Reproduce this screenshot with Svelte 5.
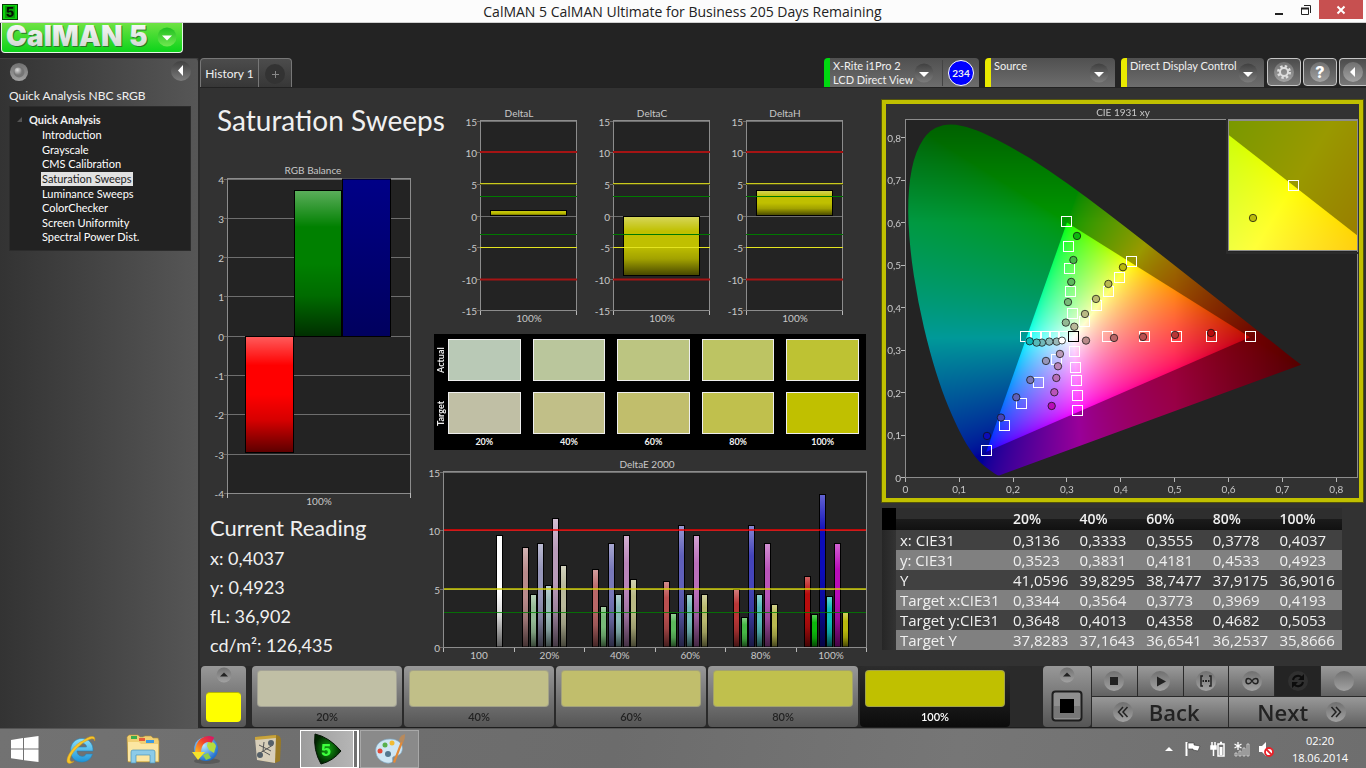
<script>
  import { onMount } from 'svelte';

  const pages = ['Introduction', 'Grayscale', 'CMS Calibration', 'Saturation Sweeps', 'Luminance Sweeps', 'ColorChecker', 'Screen Uniformity', 'Spectral Power Dist.'];
  const selected = 'Saturation Sweeps';
  const levels = ['20%', '40%', '60%', '80%', '100%'];
  const actual = ['#b9c9b6', '#bac69c', '#bcc581', '#bdc463', '#bec233'];
  const target = ['#c0bfa5', '#c1bf88', '#c1be6c', '#c0c04d', '#c0c000'];

  const deltas = [
    { name: 'DeltaL', value: 0.8 },
    { name: 'DeltaC', value: -9.3 },
    { name: 'DeltaH', value: 4 }
  ];
  const dy = (v) => 112 - v * 6.33;
  const row = (n) => Math.floor(n) + 0.5;

  const hues = {
    red: ['#b98a8a', '#b96767', '#b94f4f', '#b83636', '#b80c0c'],
    green: ['#93b993', '#78b978', '#5cb85c', '#45b845', '#0db80d'],
    blue: ['#9696b9', '#7878b9', '#6060b9', '#4444b9', '#0c0cb9'],
    cyan: ['#9ab9b9', '#8ab9b9', '#72b9b9', '#54b9b9', '#0cb9b9'],
    magenta: ['#b99ab9', '#b984b9', '#b96eb9', '#b954b9', '#b90cb9'],
    yellow: ['#b9b99a', '#b9b984', '#b9b96e', '#b9b950', '#b9b90c']
  };
  const hueNames = Object.keys(hues);
  const deltaE = [
    [8.55, 4.56, 8.9, 5.3, 11, 7],
    [6.7, 3.5, 8.85, 4.5, 9.6, 5.85],
    [5.6, 2.9, 10.4, 4.5, 9.6, 4.5],
    [5, 2.6, 10.45, 4.55, 8.9, 3.65],
    [6.1, 2.85, 13.1, 4.4, 8.9, 2.95]
  ];
  const ey = (v) => 191.5 - v * 11.7;
  const eBars = [{ x: 69, v: 9.6, c: '#ffffff' }];
  deltaE.forEach((group, g) => group.forEach((v, k) => {
    eBars.push({ x: Math.round(95 + g * 70.4 + k * 7.6), v, c: hues[hueNames[k]][g] });
  }));

  const targets = [
    [0.299, 0.603], [0.3026, 0.544], [0.3045, 0.4925], [0.3063, 0.438], [0.31, 0.386],
    [0.4193, 0.5075], [0.3967, 0.4698], [0.3769, 0.438], [0.3558, 0.404], [0.3335, 0.368],
    [0.375, 0.3318], [0.4437, 0.3318], [0.5025, 0.3318], [0.568, 0.3318], [0.64, 0.3318],
    [0.224, 0.3318], [0.2426, 0.3318], [0.2605, 0.3318], [0.2766, 0.3318], [0.294, 0.3318],
    [0.3137, 0.2957], [0.3156, 0.2596], [0.3175, 0.2275], [0.3193, 0.193], [0.3205, 0.157],
    [0.2803, 0.277], [0.2469, 0.2227], [0.216, 0.1733], [0.185, 0.1216], [0.1498, 0.0627]
  ];
  const measured = {
    green: [[0.298, 0.3647], [0.302, 0.413], [0.308, 0.4604], [0.312, 0.512], [0.3187, 0.5686]],
    yellow: [[0.3137, 0.355], [0.3335, 0.385], [0.354, 0.4204], [0.3769, 0.4557], [0.404, 0.495]],
    red: [[0.3354, 0.3224], [0.3874, 0.3286], [0.4412, 0.331], [0.5006, 0.3357], [0.5674, 0.3404]],
    cyan: [[0.281, 0.32], [0.2673, 0.32], [0.2537, 0.3176], [0.2438, 0.3176], [0.2308, 0.3208]],
    magenta: [[0.287, 0.291], [0.2834, 0.262], [0.2803, 0.2345], [0.2766, 0.2008], [0.2717, 0.1686]],
    blue: [[0.2611, 0.2745], [0.232, 0.2298], [0.206, 0.189], [0.1776, 0.1412], [0.1516, 0.098]]
  };
  const cx = (x) => 19.3 + x * 538.75;
  const cy = (y) => 373.6 - y * 425;

  const locus = [
    [0.1741, 0.005], [0.1714, 0.0051], [0.1644, 0.0109], [0.1566, 0.0177], [0.144, 0.0297], [0.1355, 0.0399],
    [0.1241, 0.0578], [0.1096, 0.0868], [0.0913, 0.1327], [0.0687, 0.2007], [0.0454, 0.295], [0.0235, 0.4127],
    [0.0082, 0.5384], [0.0039, 0.6548], [0.0139, 0.7502], [0.0389, 0.812], [0.0743, 0.8338], [0.1142, 0.8262],
    [0.1547, 0.8059], [0.2296, 0.7543], [0.3016, 0.6923], [0.3731, 0.6245], [0.4441, 0.5547], [0.5125, 0.4866],
    [0.5752, 0.4242], [0.627, 0.3725], [0.6658, 0.334], [0.6915, 0.3083], [0.719, 0.2809], [0.7347, 0.2653]
  ];
  const gamut = [[0.64, 0.33], [0.3, 0.6], [0.15, 0.06]];

  function chroma(x, y, scale) {
    const yy = Math.max(y, 0.002);
    const X = x / yy, Z = (1 - x - yy) / yy;
    const rgb = [
      3.2406 * X - 1.5372 - 0.4986 * Z,
      -0.9689 * X + 1.8758 + 0.0415 * Z,
      0.0557 * X - 0.204 + 1.057 * Z
    ].map((v) => Math.max(v, 0));
    const top = Math.max(...rgb, 0.0001);
    let fade = 1;
    if (x > 0.5) fade -= (x - 0.5) * 1.9;
    if (y > 0.6) fade -= (y - 0.6) * 1.6;
    return rgb.map((v) => 255 * scale * fade * Math.pow(v / top, 0.62));
  }

  function layer(w, h, ux, uy, scale) {
    const c = document.createElement('canvas');
    c.width = w;
    c.height = h;
    const g = c.getContext('2d');
    const img = g.createImageData(w, h);
    for (let j = 0; j < h; j++) {
      for (let i = 0; i < w; i++) {
        const [r, gg, b] = chroma(ux(i), uy(j), scale);
        img.data.set([r, gg, b, 255], (j * w + i) * 4);
      }
    }
    g.putImageData(img, 0, 0);
    return c;
  }

  let diagram;
  onMount(() => {
    const g = diagram.getContext('2d');
    const w = diagram.width, h = diagram.height;
    const ux = (i) => (i + 0.5 - 19.3) / 538.75;
    const uy = (j) => (373.6 - j - 0.5) / 425;
    g.fillStyle = '#232323';
    g.fillRect(19, 15, 453, 359);
    g.save();
    g.beginPath();
    g.moveTo(cx(locus[0][0]), cy(locus[0][1]));
    for (let i = 1; i < locus.length - 1; i++) {
      const [a, b] = locus[i], [c, d] = locus[i + 1];
      g.quadraticCurveTo(cx(a), cy(b), cx((a + c) / 2), cy((b + d) / 2));
    }
    g.lineTo(cx(0.7347), cy(0.2653));
    g.closePath();
    g.clip();
    g.drawImage(layer(w, h, ux, uy, 0.6), 0, 0);
    g.beginPath();
    gamut.forEach(([x, y], i) => (i ? g.lineTo(cx(x), cy(y)) : g.moveTo(cx(x), cy(y))));
    g.closePath();
    g.clip();
    g.drawImage(layer(w, h, ux, uy, 1), 0, 0);
    g.restore();

    const zx = (x) => 64.5 + (x - 0.4193) * 2583;
    const zy = (y) => 64.5 - (y - 0.5053) * 2538;
    const vx = (i) => 0.4193 + (i - 64) / 2583;
    const vy = (j) => 0.5053 - (j - 64) / 2538;
    g.translate(343, 17);
    g.drawImage(layer(129, 130, vx, vy, 0.6), 0, 0);
    g.beginPath();
    g.rect(0, 0, 129, 130);
    g.clip();
    g.beginPath();
    gamut.forEach(([x, y], i) => (i ? g.lineTo(zx(x), zy(y)) : g.moveTo(zx(x), zy(y))));
    g.closePath();
    g.clip();
    g.drawImage(layer(129, 130, vx, vy, 1), 0, 0);
  });

  const table = [
    ['x: CIE31', '0,3136', '0,3333', '0,3555', '0,3778', '0,4037'],
    ['y: CIE31', '0,3523', '0,3831', '0,4181', '0,4533', '0,4923'],
    ['Y', '41,0596', '39,8295', '38,7477', '37,9175', '36,9016'],
    ['Target x:CIE31', '0,3344', '0,3564', '0,3773', '0,3969', '0,4193'],
    ['Target y:CIE31', '0,3648', '0,4013', '0,4358', '0,4682', '0,5053'],
    ['Target Y', '37,8283', '37,1643', '36,6541', '36,2537', '35,8666']
  ];
</script>

{#snippet chevron()}
  <svg class="knob" width="20" height="20" viewBox="0 0 20 20" aria-hidden="true">
    <circle cx="10" cy="10" r="9.5" fill="url(#knobFill)" />
    <path d="M5 9h10l-5 5z" fill="#fff" />
  </svg>
{/snippet}

<div class="window">
  <svg class="defs" width="0" height="0" aria-hidden="true">
    <defs>
      <linearGradient id="knobFill" x1="0" y1="0" x2="0" y2="1"><stop offset="0" stop-color="#404040" /><stop offset="1" stop-color="#7c7c7c" /></linearGradient>
      <linearGradient id="padFill" x1="0" y1="0" x2="0" y2="1"><stop offset="0" stop-color="#707070" /><stop offset="1" stop-color="#a2a2a2" /></linearGradient>
      <linearGradient id="gloss" x1="0" y1="0" x2="0" y2="1">
        <stop offset="0" stop-color="#fff" stop-opacity=".36" /><stop offset=".25" stop-color="#fff" stop-opacity="0" />
        <stop offset=".5" stop-color="#000" stop-opacity="0" /><stop offset=".72" stop-color="#000" stop-opacity=".16" /><stop offset="1" stop-color="#000" stop-opacity=".64" />
      </linearGradient>
      <linearGradient id="navy" x1="0" y1="0" x2="0" y2="1"><stop offset="0" stop-color="#000087" /><stop offset="1" stop-color="#00005e" /></linearGradient>
      <linearGradient id="silver" x1="0" y1="0" x2="0" y2="1"><stop offset="0" stop-color="#fff" /><stop offset="1" stop-color="#c9d0c9" /></linearGradient>
      <linearGradient id="leaf" x1="0" y1="0" x2="0" y2="1"><stop offset="0" stop-color="#20c020" /><stop offset="1" stop-color="#70e850" /></linearGradient>
      <linearGradient id="ieBlue" x1="0" y1="0" x2="0" y2="1"><stop offset="0" stop-color="#8be0fb" /><stop offset="1" stop-color="#1e94d8" /></linearGradient>
      <radialGradient id="globe" cx=".4" cy=".35" r=".7"><stop offset="0" stop-color="#b8e8ff" /><stop offset="1" stop-color="#1565c8" /></radialGradient>
      <linearGradient id="arc" x1="1" y1="0" x2="0" y2="1"><stop offset="0" stop-color="#d81b60" /><stop offset=".4" stop-color="#f0402c" /><stop offset="1" stop-color="#ffb020" /></linearGradient>
      <radialGradient id="emerald"><stop offset="0" stop-color="#12a412" /><stop offset="1" stop-color="#002400" /></radialGradient>
      <radialGradient id="bead" cx=".4" cy=".35" r=".6"><stop offset="0" stop-color="#ddd" /><stop offset="1" stop-color="#858585" /></radialGradient>
    </defs>
  </svg>

  <header class="titlebar">
    <svg width="16" height="16" viewBox="0 0 16 16" aria-hidden="true">
      <rect width="16" height="16" fill="#063d06" /><rect x="1" y="1" width="14" height="14" fill="#0cd40c" /><rect x="3" y="2" width="10" height="12" fill="#0a9a0a" />
      <text x="8" y="13" class="mini-five" text-anchor="middle" fill="#021002">5</text>
    </svg>
    <span class="caption">CalMAN 5 CalMAN Ultimate for Business 205 Days Remaining</span>
    <div class="caption-buttons">
      <button aria-label="Minimize"><svg width="10" height="12"><path d="M1 10h8" stroke="#222" stroke-width="2" /></svg></button>
      <button aria-label="Restore"><svg width="12" height="12"><path d="M1.5 4.5h7v6h-7zM4 1.5h6.500v7.500" stroke="#222" fill="none" /><path d="M1 4.500h8" stroke="#222" stroke-width="2" /></svg></button>
      <button class="close" aria-label="Close"><svg width="10" height="10"><path d="M1.500 1.500l7 7M8.500 1.500l-7 7" stroke="#fff" stroke-width="2" /></svg></button>
    </div>
  </header>

  <div class="brand-row">
    <button class="brand">
      <svg width="180" height="29" viewBox="0 0 180 29">
        <text x="5" y="24" class="brand-shadow">CalMAN</text>
        <text x="4" y="23" class="brand-text">CalMAN</text>
        <text x="128" y="24" class="brand-shadow">5</text>
        <text x="127" y="23" class="brand-text">5</text>
        <circle cx="165" cy="14" r="9.500" fill="url(#leaf)" /><path d="M160 12.500h10l-5 5z" fill="#fff" />
      </svg>
    </button>
  </div>

  <div class="body">
    <aside>
      <div class="side-head">
        <svg width="20" height="20" viewBox="0 0 22 22"><circle cx="11" cy="11" r="10" fill="url(#padFill)" /><circle cx="11" cy="11" r="6" fill="#757575" /><circle cx="10" cy="10" r="4" fill="url(#bead)" /></svg>
        <button class="plain" aria-label="Collapse panel"><svg width="20" height="20" viewBox="0 0 20 20"><circle cx="10" cy="10" r="10" fill="url(#knobFill)" /><path d="M12 4v11l-5-5.500z" fill="#fff" /></svg></button>
      </div>
      <h2>Quick Analysis NBC sRGB</h2>
      <nav>
        <div class="root"><svg width="6" height="6"><path d="M5 0v5h-5z" fill="#555" /></svg>Quick Analysis</div>
        <ul>
          {#each pages as page}<li><a href="#top" class:selected={page === selected}>{page}</a></li>{/each}
        </ul>
      </nav>
    </aside>

    <main>
      <div class="toolbar">
        <div class="tabs">
          <button class="tab">History 1</button>
          <button class="tab add" aria-label="Add history"><svg width="20" height="20"><circle cx="10" cy="10" r="10" fill="#333" /><path d="M10.500 7v7M7 10.500h7" stroke="#888" /></svg></button>
        </div>
        <div class="devices">
          <div class="device meter ready"><button>X-Rite i1Pro 2<br />LCD Direct View</button>{@render chevron()}<div class="count"><span>234</span></div></div>
          <div class="device source"><button>Source</button>{@render chevron()}</div>
          <div class="device control"><button>Direct Display Control</button>{@render chevron()}</div>
          <button class="tool" aria-label="Settings"><svg width="20" height="20" viewBox="0 0 20 20"><circle cx="10" cy="10" r="10" fill="url(#padFill)" /><circle cx="10" cy="10" r="5.500" fill="none" stroke="#ddd" stroke-width="3" stroke-dasharray="2.300 2.020" /><circle cx="10" cy="10" r="4" fill="none" stroke="#ddd" stroke-width="2" /></svg></button>
          <button class="tool" aria-label="Help"><svg width="20" height="20" viewBox="0 0 20 20"><circle cx="10" cy="10" r="10" fill="url(#padFill)" /><text x="10" y="16" text-anchor="middle" class="help">?</text></svg></button>
          <button class="tool last" aria-label="Hide toolbar"><svg width="20" height="20" viewBox="0 0 20 20"><circle cx="10" cy="10" r="10" fill="url(#padFill)" /><path d="M12 5v10l-5-5z" fill="#fff" /></svg></button>
        </div>
      </div>

      <div class="content">
        <section class="left">
          <h1>Saturation Sweeps</h1>
          <svg class="chart" viewBox="0 0 227 350">
            <rect x="27.500" y="18.500" width="183" height="315" class="plot" />
            <text x="113" y="14" text-anchor="middle">RGB Balance</text>
            {#each [4, 3, 2, 1, 0, -1, -2, -3, -4] as v, i}
              {@const y = row(19 + i * 39.3)}
              <path d="M24 {y}H210.500" class="grid" />
              <text x="24" y={y + 4} text-anchor="end">{v}</text>
            {/each}
            <rect x="27.500" y="18.500" width="183" height="315" class="frame" />
            <path d="M27.500 333v5M210.500 333v5" class="axis" />
            <rect x="45.500" y="176.500" width="48" height="116" fill="#f00" /><rect x="45.500" y="176.500" width="48" height="116" class="bar" />
            <rect x="94.500" y="30.500" width="47" height="146" fill="#008000" /><rect x="94.500" y="30.500" width="47" height="146" class="bar" />
            <rect x="142.500" y="19" width="48" height="157.500" fill="url(#navy)" stroke="#000" />
            <text x="119" y="345" text-anchor="middle">100%</text>
          </svg>
          <div class="reading">
            <h3>Current Reading</h3>
            <p>x: 0,4037</p>
            <p>y: 0,4923</p>
            <p>fL: 36,902</p>
            <p>cd/m²: 126,435</p>
          </div>
        </section>

        <section class="middle">
          <div class="deltas">
            {#each deltas as d}
              <svg class="chart" viewBox="0 0 133 224">
                <rect x="29.500" y="16.500" width="96" height="190" class="plot" />
                <text x="68" y="13" text-anchor="middle">{d.name}</text>
                {#each [15, 10, 5, 0, -5, -10, -15] as v}
                  <path d="M26 {row(dy(v))}H125.500" class="grid" />
                  <text x="26" y={row(dy(v)) + 4} text-anchor="end">{v}</text>
                {/each}
                <rect x="39.500" y={row(dy(Math.max(d.value, 0)))} width="76" height={Math.round(Math.abs(d.value) * 6.33)} fill="#c0c000" />
                <rect x="39.500" y={row(dy(Math.max(d.value, 0)))} width="76" height={Math.round(Math.abs(d.value) * 6.33)} class="bar" />
                <rect x="29.500" y="16.500" width="96" height="190" class="frame" />
                <path d="M29 48h97M29 175.500h97" stroke="#a51414" stroke-width="2" />
                <path d="M29 79.500h97" stroke="#c9c91c" /><path d="M29 80.500h97" stroke="#4d4d1c" /><path d="M29 143.500h97" stroke="#e4e420" />
                <path d="M29 92.500h97M29 130.500h97" stroke="#007800" />
                <path d="M29.500 207v4M125.500 207v4" class="axis" />
                <text x="78" y="218" text-anchor="middle">100%</text>
              </svg>
            {/each}
          </div>
          <div class="swatches">
            <div class="sides"><span>Actual</span><span>Target</span></div>
            <div class="cells">
              {#each actual as c}<i style="background:{c}"></i>{/each}
              {#each target as c}<i style="background:{c}"></i>{/each}
              {#each levels as l}<b>{l}</b>{/each}
            </div>
          </div>
          <svg class="chart" viewBox="0 0 440 206">
            <rect x="16.500" y="15.500" width="423" height="176" class="plot" />
            <text x="220" y="12" text-anchor="middle">DeltaE 2000</text>
            {#each [0, 5, 10, 15] as v}
              <path d="M13 {row(ey(v))}H439.500" class="grid" />
              <text x="13" y={row(ey(v)) + 4} text-anchor="end">{v}</text>
            {/each}
            {#each eBars as b}
              <rect x={b.x + 0.5} y={row(ey(b.v))} width="6" height={191 - row(ey(b.v))} fill={b.c} />
              <rect x={b.x + 0.5} y={row(ey(b.v))} width="6" height={191 - row(ey(b.v))} class="bar" />
            {/each}
            <rect x="16.500" y="15.500" width="423" height="176" class="frame" />
            <path d="M17 74h422" stroke="#f00000" stroke-opacity=".75" stroke-width="2" />
            <path d="M17 133h422" stroke="#d4d400" stroke-opacity=".7" stroke-width="2" />
            <path d="M17 156.500h422" stroke="#008000" stroke-opacity=".8" />
            {#each ['100', ...levels] as l, i}
              <path d="M{row(16.5 + i * 70.5)} 192v4" class="axis" />
              <text x={52 + i * 70.4} y="203" text-anchor="middle">{l}</text>
            {/each}
            <path d="M439.500 192v4" class="axis" />
          </svg>
        </section>

        <section class="right">
          <div class="cie">
            <canvas bind:this={diagram} width="473" height="394"></canvas>
            <svg class="chart" viewBox="0 0 473 394">
              <text x="237" y="12" text-anchor="middle">CIE 1931 xy</text>
              <rect x="19.500" y="15.500" width="452" height="358" class="frame" />
              {#each [0, 1, 2, 3, 4, 5, 6, 7, 8] as n}
                <path d="M15 {row(cy(n / 10))}h4M{row(cx(n / 10))} 374v4" class="axis" />
                <text x="15" y={cy(n / 10) + 4} text-anchor="end">{n ? '0,' + n : '0'}</text>
                <text x={cx(n / 10)} y="389" text-anchor="middle">{n ? '0,' + n : '0'}</text>
              {/each}
              {#each targets as [x, y]}
                <rect x={row(cx(x) - 5)} y={row(cy(y) - 5)} width="10" height="10" class="target" />
              {/each}
              {#each hueNames as hue}
                {#each measured[hue] as [x, y], i}
                  <circle cx={cx(x)} cy={cy(y)} r="3.700" fill={hues[hue][i]} class="dot" />
                {/each}
              {/each}
              <circle cx="176" cy="236.500" r="3.500" fill="#fff" class="dot" />
              <rect x="182.500" y="227.500" width="10" height="10" fill="none" stroke="#000" />
              <path d="M341 15v134h132" fill="none" stroke="#2b2b2b" stroke-width="2" />
              <rect x="342.500" y="16.500" width="129" height="130" fill="none" stroke="#8c8c8c" />
              <rect x="402.500" y="76.500" width="10" height="10" class="target" />
              <circle cx="367" cy="114" r="3.700" fill="#b9b90c" class="dot" />
            </svg>
          </div>
          <table>
            <thead><tr><th class="grip"></th><th></th>{#each levels as l}<th>{l}</th>{/each}</tr></thead>
            <tbody>
              {#each table as cells}<tr><td class="grip"></td>{#each cells as c}<td>{c}</td>{/each}</tr>{/each}
            </tbody>
          </table>
        </section>
      </div>

      <footer>
        <button class="current" aria-label="Current patch">
          <svg width="16" height="16"><circle cx="8" cy="8" r="7.500" fill="url(#padFill)" /><path d="M4 9.500h8l-4-4z" fill="#222" /></svg>
          <i></i>
        </button>
        <div class="patches">
          {#each levels as l, i}
            <button class:active={i === 4}><i style="background:{target[i]}"></i>{l}</button>
          {/each}
        </div>
        <button class="pattern" aria-label="Pattern window">
          <svg width="16" height="16"><circle cx="8" cy="8" r="7.500" fill="url(#padFill)" /><path d="M4 9.500h8l-4-4z" fill="#222" /></svg>
          <svg width="32" height="32"><rect x="1.500" y="1.500" width="29" height="29" rx="3" fill="#8e8e8e" stroke="#1e1e1e" stroke-width="2" /><path d="M3 16h26v12h-26z" fill="#777" /><path d="M9 9h14v14h-14z" fill="#000" /></svg>
        </button>
        <div class="transport">
          <button aria-label="Stop"><svg width="20" height="20"><circle cx="10" cy="10" r="10" fill="url(#padFill)" /><path d="M6 6h8v8h-8z" fill="#222" /></svg></button>
          <button aria-label="Play"><svg width="20" height="20"><circle cx="10" cy="10" r="10" fill="url(#padFill)" /><path d="M7 5.500l9 5-9 5z" fill="#222" /></svg></button>
          <button aria-label="Read series"><svg width="20" height="20"><circle cx="10" cy="10" r="10" fill="url(#padFill)" /><path d="M7 5h-2v10h2M13 5h2v10h-2" fill="none" stroke="#222" stroke-width="1.500" /><path d="M6.500 10h1.500M9 10h2M12 10h1.500" stroke="#222" stroke-width="2" /></svg></button>
          <button aria-label="Continuous"><svg width="20" height="20"><circle cx="10" cy="10" r="10" fill="url(#padFill)" /><path d="M10 10c-2-3.500-6-3.500-6 0s4 3.500 6 0 6-3.500 6 0-4 3.500-6 0z" fill="none" stroke="#222" stroke-width="1.500" /></svg></button>
          <button class="dark" aria-label="Refresh"><svg width="20" height="20"><circle cx="10" cy="10" r="10" fill="#303030" /><path d="M5 9a5 5 0 0 1 9-2M15 11a5 5 0 0 1-9 2" fill="none" stroke="#0c0c0c" stroke-width="2" /><path d="M16 3v6h-6zM4 17v-6h6z" fill="#0c0c0c" /></svg></button>
          <button aria-label="Record"><svg width="20" height="20"><circle cx="10" cy="10" r="10" fill="url(#padFill)" /></svg></button>
          <button class="step back"><svg width="20" height="20"><circle cx="10" cy="10" r="10" fill="url(#padFill)" /><path d="M10 5l-4.500 5 4.500 5M14.500 5l-4.500 5 4.500 5" fill="none" stroke="#222" stroke-width="1.500" /></svg><span>Back</span></button>
          <button class="step next"><span>Next</span><svg width="20" height="20"><circle cx="10" cy="10" r="10" fill="url(#padFill)" /><path d="M5.500 5l4.500 5-4.500 5M10 5l4.500 5-4.500 5" fill="none" stroke="#222" stroke-width="1.500" /></svg></button>
        </div>
      </footer>
    </main>
  </div>

  <div class="taskbar">
    <button class="task" aria-label="Start"><svg width="28" height="26" viewBox="0 0 28 26"><path d="M0 4l12-2v10.500H0zM13 1.900L27.500 0v12.500H13zM0 13.500h12V24L0 22.200zM13 13.500h14.500V26L13 24.200z" fill="#fff" /></svg></button>
    <button class="task" aria-label="Internet Explorer"><svg width="32" height="32" viewBox="0 0 32 32"><path d="M28 18H12c0 6 8 7 9 3h6.500c-2 6-6 8-11 8-7 0-11-5-11-11.500S10 5.500 17 5.500 28.500 11 28 18zM12 14h9.500c0-5-9-5-9.500 0z" fill="url(#ieBlue)" stroke="#2484bd" stroke-width=".6" /><path d="M29.500 8c2-7-6-5-12 0C8 12-1 27 3 30c1.500 1 4 0 6-1.500-8 2-3-9 6-16 8-7 15-8.500 14.500-4.500z" fill="#f7c62b" stroke="#d79a10" stroke-width=".5" /></svg></button>
    <button class="task" aria-label="File Explorer"><svg width="34" height="32" viewBox="0 0 34 32"><path d="M1 4l2-2h9l2 2h3l2-1h6l2 2h5l1 3v21H2z" fill="#f0cf73" stroke="#b59235" stroke-width=".6" /><path d="M5 3h6v3h-6z" fill="#3aac4d" /><path d="M13 5h6v3h-6z" fill="#e65b38" /><path d="M20 7h8v3h-8z" fill="#3c9ce2" /><path d="M2 9h11l2 2h17v17H2z" fill="#fbe6a2" /><path d="M5 30V19q0-2 2-2h20q2 0 2 2v11h-5v-8H10v8z" fill="#8ccbe8" stroke="#4c94b8" stroke-width=".7" /></svg></button>
    <button class="task" aria-label="Color utility"><svg width="32" height="32" viewBox="0 0 32 32"><ellipse cx="18" cy="28" rx="13" ry="3" fill="#444" opacity=".5" /><circle cx="17" cy="16" r="12" fill="url(#globe)" /><path d="M19 9q6-1 8 4l-2 7-5-3-2-4z" fill="#b5dd3f" /><path d="M14 22l5-2 3 5-5 2z" fill="#8fce4a" /><path d="M24 7C17 4 9 8 9 20" fill="none" stroke="url(#arc)" stroke-width="6" /><path d="M3 19h13l-7 8z" fill="#f6e22c" /></svg></button>
    <button class="task" aria-label="Calibration map"><svg width="32" height="32" viewBox="0 0 32 32"><path d="M5 4l20-2q5 0 5 6l-1 20-5 2-16-3z" fill="#9a7a24" /><path d="M4 5l21-2-1 27-18-3z" fill="#d8cfba" /><path d="M4 4l21-2v3L4 7z" fill="#c9a43c" /><path d="M8 12l12 6M9 20l13-8M13 9l-1 9 7 4" stroke="#555" fill="none" /><circle cx="20" cy="10" r="3" fill="#556069" /><circle cx="9" cy="22" r="3" fill="#556069" /></svg></button>
    <button class="task on stack" aria-label="CalMAN 5"><svg width="32" height="32" viewBox="0 0 32 32"><path d="M4 1Q2 17 10 31q12-3 20-13Q18 4 4 1z" fill="url(#emerald)" stroke="#041304" /><text x="15" y="23" text-anchor="middle" class="big-five">5</text></svg></button>
    <button class="task on dim" aria-label="Paint"><svg width="34" height="32" viewBox="0 0 34 32"><path d="M3 20C1 12 8 6 17 6s14 6 12 12-7 4-9 6 2 5-3 6S4 27 3 20z" fill="#cfe6f4" stroke="#7ea9c6" stroke-width=".7" /><circle cx="7" cy="18" r="2.500" fill="#e24a38" /><circle cx="12" cy="12" r="2.500" fill="#58b04d" /><circle cx="19" cy="10" r="2.500" fill="#f1bb34" /><circle cx="15" cy="21" r="3" fill="#55788f" /><path d="M28 8L20 29l2 1 8-21z" fill="#e38a38" /><path d="M26 8q0-5 6-7 0 6-2 9z" fill="#b88a5c" /></svg></button>
    <div class="tray">
      <svg width="8" height="6"><path d="M0 5h8l-4-4z" fill="#fff" /></svg>
      <svg width="17" height="16" viewBox="0 0 17 16"><path d="M1.500 1v14" stroke="#fff" stroke-width="2" /><path d="M3 2h6v2l6 1-2 5-5-1v-1h-5z" fill="#fff" stroke="#333" stroke-width=".6" /></svg>
      <svg width="16" height="16" viewBox="0 0 16 16"><path d="M2 1v4M5 1v4M1 5h5v3h-5zM3.500 8v7" stroke="#fff" stroke-width="1.500" fill="#fff" /><path d="M8 3h6v12h-6zM10 1.500h2" stroke="#fff" stroke-width="1.500" fill="none" /><path d="M9.500 6h3v8h-3z" fill="#fff" /></svg>
      <svg width="16" height="16" viewBox="0 0 16 16"><path d="M4 1v8M0.500 3l7 4M7.500 3l-7 4" stroke="#fff" stroke-width="1.300" /><path d="M1 15v-3h2v3zM5 15v-5h2v5zM9 15V7h2v8zM13 15V3h2v12z" fill="none" stroke="#ddd" stroke-width=".8" /></svg>
      <svg width="16" height="16" viewBox="0 0 16 16"><path d="M1 5h3l4-4v14l-4-4h-3z" fill="#fff" /><circle cx="11" cy="11" r="4" fill="#fff" stroke="#e8222a" stroke-width="1.800" /><path d="M8 8l6 6" stroke="#e8222a" stroke-width="1.800" /></svg>
      <div class="clock">02:20<br />18.06.2014</div>
    </div>
  </div>
</div>

<style>
  :global(body) { margin: 0; background: #232323; }
  .window { min-height: 100vh; display: flex; flex-direction: column; font-family: Lato, sans-serif; color: #f0f0f0; background: #232323; }
  .window * { box-sizing: border-box; }
  button { font: inherit; color: inherit; border: 0; padding: 0; background: none; }
  svg { display: block; flex: none; overflow: visible; }
  h1, h2, h3, p, ul { margin: 0; padding: 0; font-weight: 400; }
  .defs { position: absolute; }
  i { display: block; }

  .titlebar { height: 23px; background: #fcfcfc; border-bottom: 1px solid #d0d0d0; display: grid; grid-template-columns: 98px 1fr 98px; align-items: center; padding: 0 3px 0 2px; color: #222; }
  .caption { text-align: center; font: 14px/22px "Open Sans", sans-serif; padding-top: 1px; }
  .caption-buttons { display: flex; justify-content: flex-end; align-self: start; height: 19px; }
  .caption-buttons button { width: 27px; display: grid; place-items: center; }
  .caption-buttons .close { width: 44px; background: #c75050; }
  .mini-five { font: 800 13px Inter, sans-serif; }
  .big-five { font: 800 16px Inter, sans-serif; fill: #3dff3d; }

  .brand-row { height: 35px; }
  .brand { height: 30px; display: block; margin-left: 1px; background: linear-gradient(#6fe243, #0cd41a); border: 1px solid #e4f6e4; border-top: 0; border-radius: 0 0 4px 4px; }
  .brand-text, .brand-shadow { font: 900 28px Inter, sans-serif; fill: url(#silver); }
  .brand-shadow { fill: #28782a; }

  .body { flex: 1; display: flex; }
  aside { flex: none; width: 200px; background: linear-gradient(90deg, #333, #565656); border-top: 1px solid #404040; border-right: 2px solid #2b2b2b; border-radius: 0 4px 0 0; padding: 2px 7px 0 9px; }
  .side-head { display: flex; justify-content: space-between; height: 26px; padding-top: 1px; }
  .side-head button { margin-top: -1px; align-self: start; }
  aside h2 { font-size: 12px; line-height: 18px; }
  nav { margin-top: 1px; background: #222; border: 1px solid #2c2c2c; height: 145px; padding: 5px 0 0 31px; font-size: 11px; }
  .root { display: flex; align-items: center; gap: 6px; margin-left: -24px; font-weight: 700; line-height: 16px; }
  nav ul { list-style: none; display: grid; grid-auto-rows: 1fr; height: 117px; }
  nav li { line-height: 14px; }
  nav a { color: #fff; text-decoration: none; display: inline-block; padding: 0 1px; }
  nav a.selected { background: #e2e2e2; color: #222; }

  main { flex: 1; min-width: 0; display: flex; flex-direction: column; background: #323232; }
  .toolbar { height: 30px; background: #232323; display: flex; justify-content: space-between; }
  .tabs, .devices { display: flex; font-size: 12px; }
  .tabs { border: 1px solid #777; border-bottom: 0; border-radius: 4px 4px 0 0; background: linear-gradient(#4c4c4c, #363636); }
  .tab { width: 57px; }
  .tab.add { width: 33px; border-left: 1px solid #777; display: grid; place-items: center; }
  .device { display: flex; align-items: center; background: linear-gradient(#505050, #6e6e6e); border-left: 6px solid #eaea00; border-radius: 4px 4px 0 0; margin-right: 6px; padding-right: 6px; font-size: 11px; line-height: 14px; }
  .device button { align-self: start; flex: 1; text-align: left; padding: 1px 0 0 3px; white-space: nowrap; }
  .ready { border-left-color: #00d810; }
  .meter { width: 155px; padding-right: 0; }
  .source { width: 130px; }
  .control { width: 143px; margin-right: 3px; }
  .count { border-left: 1px solid #444; margin-left: 8px; width: 37px; display: grid; place-items: center; }
  .count span { width: 26px; height: 26px; border-radius: 50%; background: #00f; border: 1px solid #fff; font-size: 10px; font-weight: 700; line-height: 24px; text-align: center; }
  .tool { width: 34px; height: 28px; margin-right: 2px; display: grid; place-items: center; border: 1px solid #c4c4c4; border-radius: 4px; background: linear-gradient(#4c4c4c, #777); }
  .tool.last { margin-right: 0; width: 27px; border-right: 0; border-radius: 4px 0 0 4px; }
  .help { font: 800 16px Inter, sans-serif; fill: #fff; }

  .content { flex: 1; display: grid; grid-template-columns: minmax(0, 227fr) minmax(0, 440fr) minmax(0, 499fr); align-items: start; border-top: 1px solid #222; margin-top: -1px; }
  .chart { width: 100%; height: auto; font-size: 10px; fill: #c8c8c8; }
  .plot { fill: #232323; }
  .frame { fill: none; stroke: #8c8c8c; }
  .grid { stroke: #6e6e6e; }
  .axis { stroke: #b8b8b8; fill: none; }
  .bar { fill: url(#gloss); stroke: #000; }
  .target { fill: none; stroke: #fff; }
  .dot { stroke: #111; stroke-opacity: .75; }

  h1 { font-size: 28px; line-height: 64px; margin-left: 17px; white-space: nowrap; }
  .left .chart { margin-top: 8px; }
  .reading { padding-left: 10px; margin-top: 2px; font-size: 18px; line-height: 29px; }
  h3 { font-size: 22px; line-height: 32px; }
  .middle { padding-top: 16px; }
  .deltas { display: grid; grid-template-columns: repeat(3, 1fr); padding: 0 17px 0 24px; }
  .swatches { margin: 6px 1px 6px 7px; height: 116px; background: #000; padding: 5px 7px 0 0; display: flex; }
  .sides { width: 14px; display: grid; grid-template-rows: 42px 42px; gap: 11px; align-content: start; font-size: 9px; font-weight: 700; line-height: 14px; text-align: center; }
  .sides span { writing-mode: vertical-rl; transform: rotate(180deg); }
  .cells { flex: 1; display: grid; grid-template-columns: repeat(5, 1fr); grid-template-rows: 42px 42px 14px; column-gap: 12px; align-content: start; }
  .cells i { border: 1px solid #eee; }
  .cells i:nth-child(-n+5) { margin-bottom: 0; }
  .cells i:nth-child(n+6) { margin: 0; }
  .cells { grid-template-rows: 42px 42px 16px; }
  .cells i:nth-child(n+6) { position: relative; }
  .cells b { font-size: 9px; line-height: 16px; text-align: center; }
  .cells { grid-template-rows: 42px 11px 42px 16px; }
  .cells i:nth-child(n+6) { grid-row: 3; }
  .cells b { grid-row: 4; }

  .right { padding: 11px 2px 0 14px; }
  .cie { display: grid; border: 5px solid #c0c000; outline: 1px solid #55550c; outline-offset: -1px; }
  .cie canvas, .cie svg { grid-area: 1 / 1; width: 100%; }
  .cie canvas { height: 100%; }
  table { margin: 5px 0 0 1px; width: 460px; max-width: 100%; border-collapse: collapse; table-layout: fixed; font: 15px/20px "Open Sans", "Noto Sans", sans-serif; }
  th, td { padding: 0; text-align: left; white-space: nowrap; }
  th { height: 22px; font-weight: 600; font-size: 14px; padding-left: 4px; background: linear-gradient(#2e2e2e 50%, #1b1b1b 50%, #111); }
  td { height: 20px; padding-left: 4px; background: #414141; }
  tbody tr:nth-child(even) td { background: #808080; }
  th:nth-child(2) { width: 113px; }
  th.grip { width: 14px; background: #000; padding: 0; }
  tbody tr td.grip, tbody tr:nth-child(even) td.grip { background: linear-gradient(90deg, #262626, #333); padding: 0; }

  footer { height: 62px; display: flex; background: #2a2a2a; border-bottom: 1px solid #1e1e1e; padding-left: 1px; }
  footer button { border-radius: 4px; background: linear-gradient(#989898, #555); color: #222; }
  .current { width: 45px; margin-right: 6px; display: flex; flex-direction: column; align-items: center; justify-content: space-between; padding: 1px 0 5px; }
  .current i { width: 35px; height: 30px; background: #ff0; border-radius: 4px; border-top: 1px solid #b8b800; }
  .patches { flex: 1; display: grid; grid-template-columns: repeat(5, 1fr); gap: 2px; max-width: 758px; margin-right: auto; }
  .patches button { font-size: 11px; font-weight: 600; line-height: 20px; padding: 4px 5px 0; }
  .patches i { height: 37px; border-radius: 4px; border: 1px solid #8888; margin-bottom: 0; }
  .patches .active { background: linear-gradient(#2c2c2c, #0c0c0c); color: #fff; }
  .pattern { width: 48px; margin: 0 1px 0 33px; display: flex; flex-direction: column; align-items: center; justify-content: space-between; padding: 1px 0 5px; }
  .transport { width: 274px; display: grid; grid-template-columns: repeat(6, 1fr); gap: 1px; }
  .transport button { height: 30px; display: flex; align-items: center; justify-content: center; border-radius: 0; background: linear-gradient(#9a9a9a, #626262); }
  .transport button.dark { background: #242424; }
  .transport .step { grid-column: span 3; font: 600 22px/30px "Open Sans", sans-serif; gap: 16px; background: linear-gradient(#999, #606060); }
  .transport .back { padding-right: 8px; }
  .transport .next { padding-left: 8px; gap: 18px; }

  .taskbar { height: 40px; display: flex; align-items: center; background: linear-gradient(100deg, #727272, #6c6c6c 45%, #767676 70%, #6e6e6e); border-top: 1px solid #555; }
  .task { width: 62px; height: 38px; display: grid; place-items: center; }
  .task:first-child { width: 50px; }
  .task.on { width: 54px; border: 1px solid #fff; background: linear-gradient(90deg, #9c9c9c, #b5b5b5); margin-left: 2px; }
  .task.on.stack { margin-right: 6px; box-shadow: 4px 0 0 -1px #707070, 5px 0 0 0 #fff; }
  .task.on.dim { width: 59px; border-color: #a8a8a8; background: #8a8a8a; margin-left: 0; }
  .tray { margin-left: auto; display: flex; align-items: center; gap: 8px; padding-right: 18px; }
  .tray svg:first-child { margin-right: 4px; }
  .clock { font: 11px/17px "Open Sans", sans-serif; text-align: center; margin-left: 10px; color: #fff; }
</style>
